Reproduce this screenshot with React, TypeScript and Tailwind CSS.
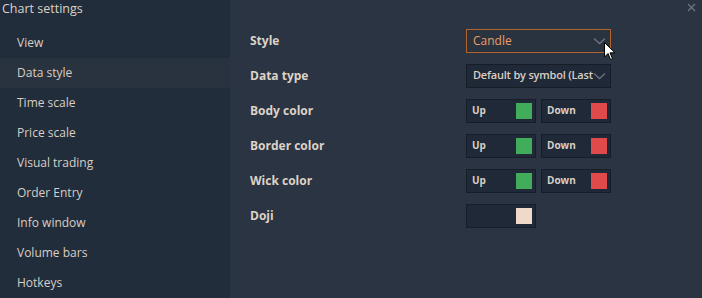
import React from "react";

const menu = [
  "View",
  "Data style",
  "Time scale",
  "Price scale",
  "Visual trading",
  "Order Entry",
  "Info window",
  "Volume bars",
  "Hotkeys",
];

const Chevron = () => (
  <svg width="13" height="8" viewBox="0 0 13 8" className="shrink-0">
    <path d="M1 1.5 L6.5 6.5 L12 1.5" fill="none" stroke="#6b7480" strokeWidth="1.3" />
  </svg>
);

const ColorBox: React.FC<{ label?: string; color: string }> = ({ label, color }) => (
  <div className="w-[70px] h-[24px] bg-[#1f2937] border border-[#161d26] flex items-center justify-between pl-[5px] pr-[3px]">
    <span className="text-[10px] font-bold text-[#d9cec4]">{label}</span>
    <span className="w-[16px] h-[16px]" style={{ backgroundColor: color }} />
  </div>
);

const Row: React.FC<{ label: string; children: React.ReactNode }> = ({ label, children }) => (
  <div className="h-[35px] flex items-center">
    <div className="w-[216px] text-[12px] font-bold text-[#ddd2c7]">{label}</div>
    {children}
  </div>
);

export default function App() {
  return (
    <div
      className="w-[702px] h-[298px] flex bg-[#2a3442] overflow-hidden relative"
      style={{ fontFamily: '"Open Sans", "Noto Sans", sans-serif' }}
    >
      <div className="w-[230px] shrink-0 bg-[#212d3b] flex flex-col">
        <div className="h-[28px] pl-[2px] text-[12.5px] text-[#ddd2c7] leading-[17px]">
          Chart settings
        </div>
        {menu.map((m) => (
          <div
            key={m}
            className={`h-[30px] shrink-0 flex items-center pl-[17px] text-[12px] text-[#d9cec4] ${
              m === "Data style" ? "bg-[#29333f]" : ""
            }`}
          >
            {m}
          </div>
        ))}
      </div>
      <div className="flex-1 flex flex-col pl-[20px] pt-[23px]">
        <Row label="Style">
          <div className="w-[145px] h-[24px] border border-[#b3622b] bg-[#29333f] flex items-center justify-between pl-[6px] pr-[4px]">
            <span className="text-[12px] text-[#e99c68]">Candle</span>
            <Chevron />
          </div>
        </Row>
        <Row label="Data type">
          <div className="w-[145px] h-[24px] border border-[#161d26] bg-[#1f2937] flex items-center pl-[6px] pr-[4px] overflow-hidden">
            <span className="flex-1 min-w-0 text-[11px] font-semibold tracking-[-0.2px] text-[#d9cec4] whitespace-nowrap overflow-hidden">
              Default by symbol (Last
            </span>
            <Chevron />
          </div>
        </Row>
        <Row label="Body color">
          <div className="flex gap-[5px]">
            <ColorBox label="Up" color="#41ad5a" />
            <ColorBox label="Down" color="#e04a4b" />
          </div>
        </Row>
        <Row label="Border color">
          <div className="flex gap-[5px]">
            <ColorBox label="Up" color="#41ad5a" />
            <ColorBox label="Down" color="#e04a4b" />
          </div>
        </Row>
        <Row label="Wick color">
          <div className="flex gap-[5px]">
            <ColorBox label="Up" color="#41ad5a" />
            <ColorBox label="Down" color="#e04a4b" />
          </div>
        </Row>
        <Row label="Doji">
          <ColorBox color="#f0d9c9" />
        </Row>
      </div>
      <svg className="absolute left-[687px] top-[3px]" width="9" height="9" viewBox="0 0 9 9">
        <path d="M1 1 L8 8 M8 1 L1 8" stroke="#6e7681" strokeWidth="1.3" />
      </svg>
      <svg className="absolute left-[604px] top-[42px]" width="12" height="19" viewBox="0 0 12 19">
        <path d="M0.5 0.5 L0.5 15 L4 11.5 L6.5 17.5 L8.5 16.7 L6 10.8 L11 10.8 Z" fill="#fff" stroke="#000" strokeWidth="1" />
      </svg>
    </div>
  );
}
